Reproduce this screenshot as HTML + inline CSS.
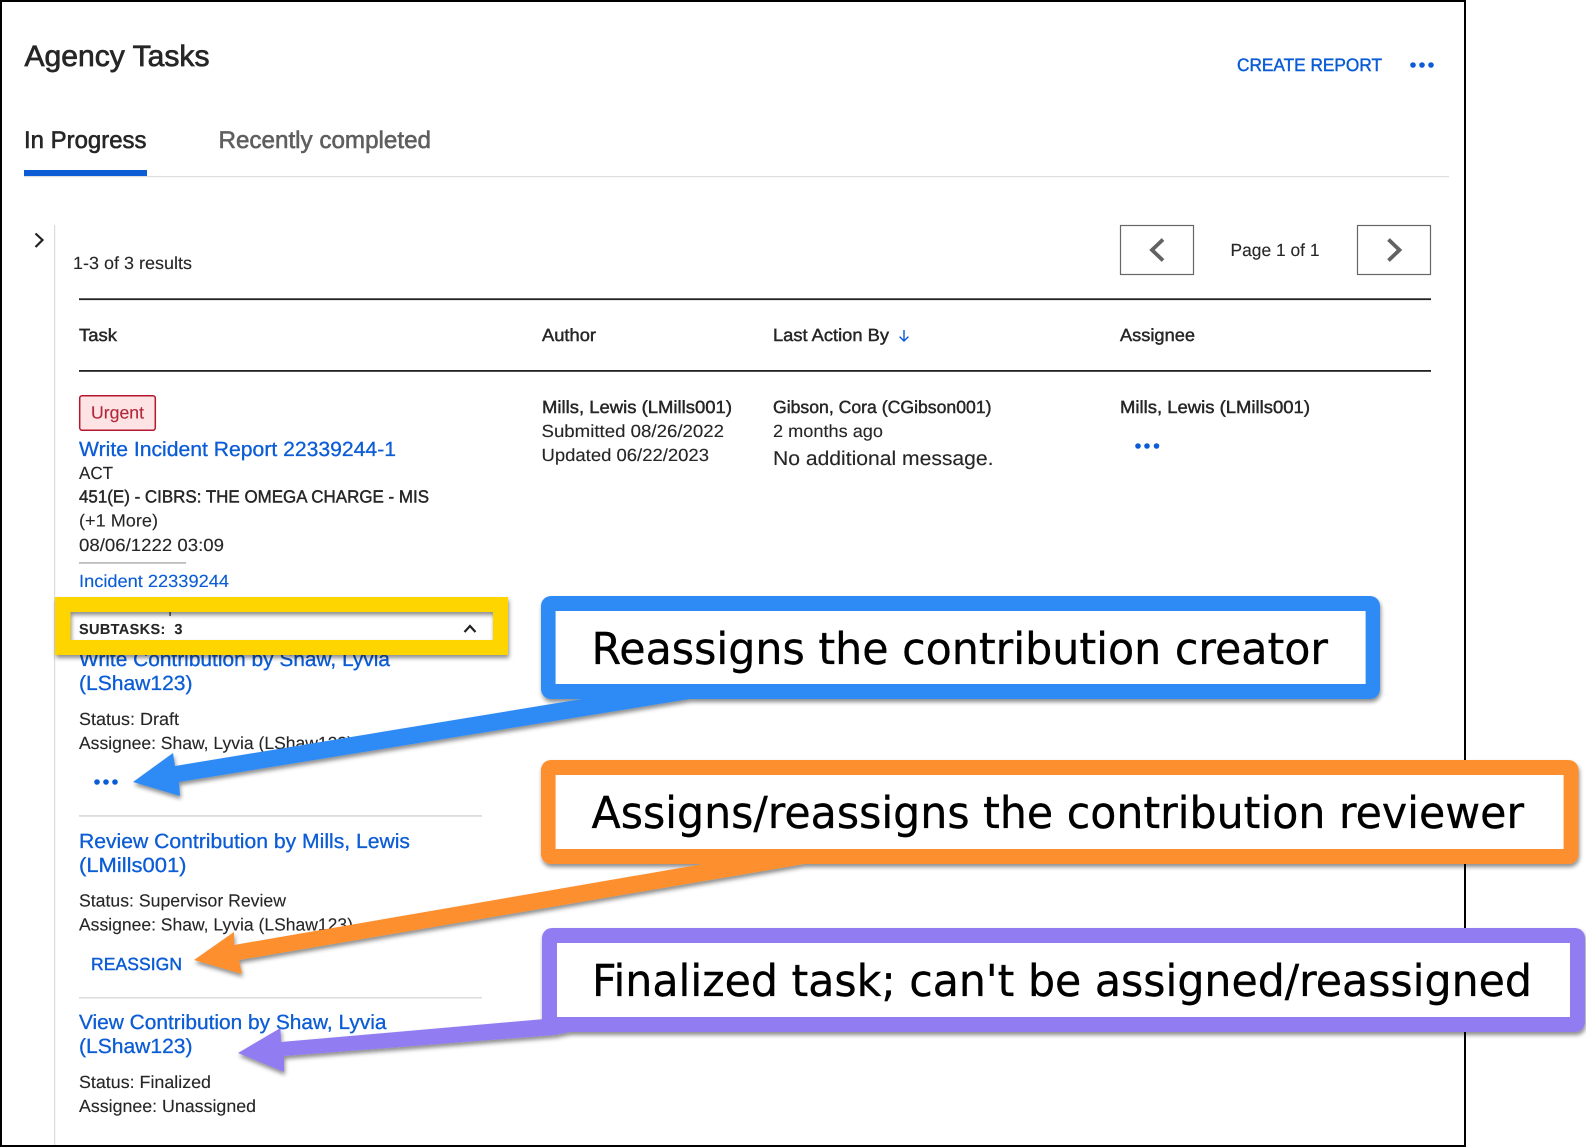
<!DOCTYPE html>
<html lang="en">
<head>
<meta charset="utf-8">
<title>Agency Tasks</title>
<style>
html,body{margin:0;padding:0;background:#fff;width:1586px;height:1147px;overflow:hidden}
svg{display:block;position:absolute;left:0;top:0}
text{font-family:"Liberation Sans",Arial,sans-serif;font-size:17.6px;fill:#262626;stroke:#262626;stroke-width:.12;text-rendering:geometricPrecision;white-space:pre}
.m{stroke:#262626;stroke-width:.45}
.l{font-size:20.5px;fill:#0b5cd5;stroke:#0b5cd5;stroke-width:.3}
.c{font-family:"DejaVu Sans","Liberation Sans",sans-serif;font-size:44px;fill:#000;stroke:#000;stroke-width:.35}
.blue{fill:#0b5cd5}
</style>
</head>
<body>
<svg width="1586" height="1147" viewBox="0 0 1586 1147" xmlns="http://www.w3.org/2000/svg">
<defs>
<filter id="s" filterUnits="userSpaceOnUse" x="0" y="0" width="1586" height="1147">
<feDropShadow dx="1" dy="3" stdDeviation="2" flood-color="#000" flood-opacity=".45"/>
</filter>
</defs>

<!-- page frame -->
<rect x="0" y="0" width="1465" height="1146" fill="#fff"/>
<rect x="0" y="0" width="1466" height="2" fill="#000"/>
<rect x="0" y="0" width="2" height="1147" fill="#000"/>
<rect x="1464" y="0" width="2" height="1147" fill="#000"/>
<rect x="0" y="1145" width="1466" height="2" fill="#000"/>

<!-- header -->
<text x="24.5" y="66" textLength="185" lengthAdjust="spacingAndGlyphs" style="font-size:29.5px;stroke-width:.7">Agency Tasks</text>
<text x="1237" y="71" textLength="145" lengthAdjust="spacingAndGlyphs" class="m" style="font-size:18px;fill:#0b5cd5;stroke:#0b5cd5">CREATE REPORT</text>
<g class="blue"><circle cx="1413" cy="65" r="2.8"/><circle cx="1422" cy="65" r="2.8"/><circle cx="1431" cy="65" r="2.8"/></g>

<!-- tabs -->
<text x="24" y="148" textLength="122.5" lengthAdjust="spacingAndGlyphs" style="font-size:24px;stroke-width:.6">In Progress</text>
<text x="218.5" y="148" textLength="212.5" lengthAdjust="spacingAndGlyphs" style="font-size:24px;fill:#5f5f5f;stroke:#5f5f5f;stroke-width:.6">Recently completed</text>
<rect x="24" y="176" width="1425" height="1.2" fill="#dedede"/>
<rect x="24" y="170" width="123" height="6" fill="#0b5cd5"/>

<!-- side rail -->
<path d="M35.5 233.5L42.5 240L35.5 247" fill="none" stroke="#222" stroke-width="2.2"/>
<rect x="54" y="225" width="1.2" height="920" fill="#dcdcdc"/>

<!-- pager -->
<text x="73" y="269" textLength="119" lengthAdjust="spacingAndGlyphs">1-3 of 3 results</text>
<rect x="1120.5" y="225.5" width="73" height="49" fill="#fff" stroke="#666" stroke-width="1.2"/>
<path d="M1163 239.5L1152 250L1163 260.5" fill="none" stroke="#626262" stroke-width="3.8"/>
<text x="1230.5" y="256" textLength="89" lengthAdjust="spacingAndGlyphs">Page 1 of 1</text>
<rect x="1357.5" y="225.5" width="73" height="49" fill="#fff" stroke="#666" stroke-width="1.2"/>
<path d="M1388.5 239.5L1399.5 250L1388.5 260.5" fill="none" stroke="#626262" stroke-width="3.8"/>

<!-- table head -->
<rect x="79" y="298.3" width="1352" height="1.8" fill="#222"/>
<text x="79" y="341" textLength="38" lengthAdjust="spacingAndGlyphs" class="m">Task</text>
<text x="542" y="341" textLength="54" lengthAdjust="spacingAndGlyphs" class="m">Author</text>
<text x="773" y="341" textLength="116" lengthAdjust="spacingAndGlyphs" class="m">Last Action By</text>
<path d="M904 330V341M899.6 336.6L904 341L908.4 336.6" fill="none" stroke="#0b5cd5" stroke-width="1.4"/>
<text x="1120" y="341" textLength="75" lengthAdjust="spacingAndGlyphs" class="m">Assignee</text>
<rect x="79" y="370" width="1352" height="1.8" fill="#222"/>

<!-- row columns -->
<text x="542" y="413" textLength="190" lengthAdjust="spacingAndGlyphs" class="m">Mills, Lewis (LMills001)</text>
<text x="541.5" y="437" textLength="182.5" lengthAdjust="spacingAndGlyphs">Submitted 08/26/2022</text>
<text x="541.5" y="461" textLength="167.5" lengthAdjust="spacingAndGlyphs">Updated 06/22/2023</text>
<text x="773" y="413" textLength="218.5" lengthAdjust="spacingAndGlyphs" class="m">Gibson, Cora (CGibson001)</text>
<text x="773" y="437" textLength="110" lengthAdjust="spacingAndGlyphs">2 months ago</text>
<text x="773" y="465" textLength="220.5" lengthAdjust="spacingAndGlyphs" style="font-size:20px">No additional message.</text>
<text x="1120" y="413" textLength="190" lengthAdjust="spacingAndGlyphs" class="m">Mills, Lewis (LMills001)</text>
<g class="blue"><circle cx="1138" cy="446" r="2.8"/><circle cx="1147" cy="446" r="2.8"/><circle cx="1156.5" cy="446" r="2.8"/></g>

<!-- task cell -->
<rect x="79.7" y="395.7" width="75.6" height="34.6" rx="2.5" fill="#fde3e4" stroke="#b5172f" stroke-width="1.5"/>
<text x="91" y="418.5" textLength="53" lengthAdjust="spacingAndGlyphs" style="fill:#b1283a;stroke:#b1283a">Urgent</text>
<text x="79" y="456" textLength="317" lengthAdjust="spacingAndGlyphs" class="l">Write Incident Report 22339244-1</text>
<text x="79" y="479" textLength="34" lengthAdjust="spacingAndGlyphs">ACT</text>
<text x="79" y="502.5" textLength="350" lengthAdjust="spacingAndGlyphs" class="m">451(E) - CIBRS: THE OMEGA CHARGE - MIS</text>
<text x="79" y="526.5" textLength="79" lengthAdjust="spacingAndGlyphs">(+1 More)</text>
<text x="79" y="551" textLength="145" lengthAdjust="spacingAndGlyphs">08/06/1222 03:09</text>
<rect x="79" y="562" width="107" height="1.8" fill="#bdbdbd"/>
<text x="79" y="587" textLength="150" lengthAdjust="spacingAndGlyphs" style="fill:#0b5cd5;stroke:#0b5cd5">Incident 22339244</text>

<!-- subtasks -->
<text x="79" y="666" textLength="311" lengthAdjust="spacingAndGlyphs" class="l">Write Contribution by Shaw, Lyvia</text>
<text x="79" y="690" textLength="113.5" lengthAdjust="spacingAndGlyphs" class="l">(LShaw123)</text>
<text x="79" y="725" textLength="100" lengthAdjust="spacingAndGlyphs">Status: Draft</text>
<text x="79" y="749" textLength="274" lengthAdjust="spacingAndGlyphs">Assignee: Shaw, Lyvia (LShaw123)</text>
<g class="blue"><circle cx="97" cy="782" r="2.8"/><circle cx="106" cy="782" r="2.8"/><circle cx="115" cy="782" r="2.8"/></g>
<rect x="79" y="815" width="403" height="1.8" fill="#dcdcdc"/>

<text x="79" y="848" textLength="331" lengthAdjust="spacingAndGlyphs" class="l">Review Contribution by Mills, Lewis</text>
<text x="79" y="872" textLength="107.5" lengthAdjust="spacingAndGlyphs" class="l">(LMills001)</text>
<text x="79" y="906.5" textLength="207" lengthAdjust="spacingAndGlyphs">Status: Supervisor Review</text>
<text x="79" y="930.5" textLength="274" lengthAdjust="spacingAndGlyphs">Assignee: Shaw, Lyvia (LShaw123)</text>
<text x="91" y="970" textLength="91" lengthAdjust="spacing" class="m" style="font-size:17.5px;fill:#0b5cd5;stroke:#0b5cd5">REASSIGN</text>
<rect x="79" y="997" width="403" height="1.5" fill="#dcdcdc"/>

<text x="79" y="1029" textLength="307.5" lengthAdjust="spacingAndGlyphs" class="l">View Contribution by Shaw, Lyvia</text>
<text x="79" y="1053" textLength="113.5" lengthAdjust="spacingAndGlyphs" class="l">(LShaw123)</text>
<text x="79" y="1088" textLength="132" lengthAdjust="spacingAndGlyphs">Status: Finalized</text>
<text x="79" y="1112" textLength="177" lengthAdjust="spacingAndGlyphs">Assignee: Unassigned</text>

<!-- yellow highlight -->
<rect x="70" y="612" width="423" height="28" fill="#fff"/>
<rect x="169.5" y="612" width="1.2" height="4" fill="#222"/>
<text x="79" y="634" textLength="103.5" lengthAdjust="spacing" style="font-size:14.5px;font-weight:bold">SUBTASKS:  3</text>
<path d="M464.5 632L470 626L475.5 632" fill="none" stroke="#222" stroke-width="2.2"/>
<path filter="url(#s)" fill="#ffd500" fill-rule="evenodd" d="M55 597H508V655H55ZM70.5 612V640H493V612Z"/>

<!-- blue callout -->
<g filter="url(#s)" fill="#2f8bf6">
<polygon points="133,782 173,753 175,766 594,697 702,697 179,782 180,796"/>
<rect x="541" y="596" width="839" height="103" rx="10"/>
</g>
<rect x="555.6" y="611" width="810" height="73" fill="#fff"/>
<text class="c" x="591.5" y="664" textLength="736.5" lengthAdjust="spacingAndGlyphs">Reassigns the contribution creator</text>

<!-- orange callout -->
<g filter="url(#s)" fill="#fd8f2d">
<polygon points="194,960 234,932 234,945 715,862 816,862 239,960 242,974"/>
<rect x="541" y="760" width="1037.5" height="104" rx="10"/>
</g>
<rect x="555.6" y="775" width="1008" height="74" fill="#fff"/>
<text class="c" x="591.5" y="828" textLength="932.5" lengthAdjust="spacingAndGlyphs">Assigns/reassigns the contribution reviewer</text>

<!-- purple callout -->
<g filter="url(#s)" fill="#917cf1">
<polygon points="238,1053 280.5,1028 281,1042 545,1019 575,1025 575,1031 555,1035 284,1056 284,1072"/>
<rect x="542" y="928" width="1043" height="104" rx="10"/>
</g>
<rect x="557" y="943" width="1013" height="74" fill="#fff"/>
<text class="c" x="592" y="996" textLength="940" lengthAdjust="spacingAndGlyphs">Finalized task; can't be assigned/reassigned</text>
</svg>
</body>
</html>
